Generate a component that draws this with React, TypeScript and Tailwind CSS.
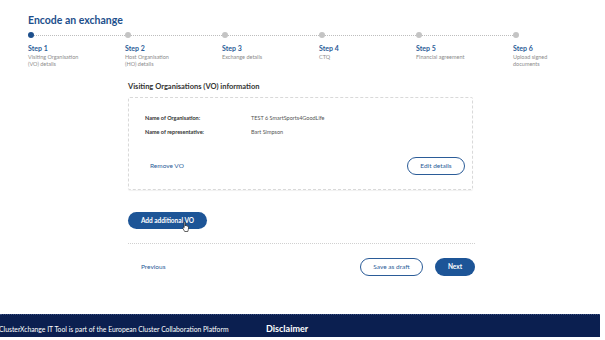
import { Fragment } from "react";

const steps = [
  { title: "Step 1", desc: ["Visiting Organisation", "(VO) details"], active: true },
  { title: "Step 2", desc: ["Host Organisation", "(HO) details"] },
  { title: "Step 3", desc: ["Exchange details"] },
  { title: "Step 4", desc: ["CTQ"] },
  { title: "Step 5", desc: ["Financial agreement"] },
  { title: "Step 6", desc: ["Upload signed", "documents"] },
];

function HandCursor() {
  return (
    <svg width="9" height="11" viewBox="0 0 18 22" className="absolute left-[54px] top-[9px]">
      <path
        d="M5 1.5c1 0 1.6.7 1.6 1.6V10l.2-1.2c.2-.9 1.6-1 2 0l.1 1c.3-.9 1.7-.9 2 0l.1.8c.4-.8 1.7-.7 1.9.2.3 1.6.3 4.2-.3 6.4L11.6 21H5.4L2 15.2c-.6-1-.4-2.1.4-2.5.8-.4 1.5 0 1.9.6V3.1c0-.9.4-1.6.7-1.6z"
        fill="#fff"
        stroke="#111"
        strokeWidth="1.3"
        strokeLinejoin="round"
      />
    </svg>
  );
}

export default function App() {
  return (
    <div
      className="w-[605px] h-[340px] bg-white flex flex-col overflow-hidden"
      style={{ fontFamily: "Lato, 'Noto Sans', sans-serif" }}
    >
      {/* Header + stepper */}
      <div className="pl-[28px] pt-[13px]">
        <h1 className="text-[10.5px] leading-[14px] font-bold text-[#1d4f8c]">Encode an exchange</h1>
        <div className="mt-[5px] flex">
          {steps.map((s, i) => (
            <div key={s.title} className="w-[97px] shrink-0">
              <div className="flex items-center h-[6px]">
                <span
                  className={`w-[6px] h-[6px] rounded-full shrink-0 ${s.active ? "bg-[#1d4f8c]" : "bg-[#c4c4c4]"}`}
                />
                {i < steps.length - 1 && (
                  <span className="flex-1 border-t border-dotted border-[#bdbdbd]" />
                )}
              </div>
              <p className="mt-[6px] text-[7px] leading-[8px] font-bold text-[#2b5c98]">{s.title}</p>
              <p className="mt-[2px] text-[5.5px] leading-[6.5px] text-[#8c8c8c]">
                {s.desc.map((d, j) => (
                  <Fragment key={d}>
                    {j > 0 && <br />}
                    {d}
                  </Fragment>
                ))}
              </p>
            </div>
          ))}
        </div>
      </div>

      {/* Main */}
      <div className="ml-[128px] w-[347px] mt-[15px]">
        <h2 className="text-[7.5px] leading-[10px] font-bold text-[#333]">
          Visiting Organisations (VO) information
        </h2>
        <div className="mt-[5px] w-[345px] h-[93px] border border-dashed border-[#d9d9d9] rounded-[2px] shadow-[0_1px_1px_rgba(0,0,0,0.06)] pl-[16px] pr-[7px] pt-[16px]">
          <div className="flex text-[5.5px] leading-[8px] text-[#333]">
            <span className="w-[106px] font-bold">Name of Organisation:</span>
            <span className="text-[#555]">TEST 6 SmartSports4GoodLife</span>
          </div>
          <div className="mt-[6px] flex text-[5.5px] leading-[8px] text-[#333]">
            <span className="w-[106px] font-bold">Name of representative:</span>
            <span className="text-[#555]">Bart Simpson</span>
          </div>
          <div className="mt-[21px] flex items-center justify-between">
            <span className="ml-[5px] text-[6.5px] text-[#2b5c98]">Remove VO</span>
            <button className="w-[58px] h-[18px] rounded-full border border-[#2b5c98] text-[6.5px] text-[#2b5c98]">
              Edit details
            </button>
          </div>
        </div>

        <button className="relative mt-[22px] w-[79px] h-[17px] rounded-full bg-[#1d5597] text-white text-[6.5px] font-bold">
          Add additional VO
          <HandCursor />
        </button>

        <div className="mt-[14px] border-t border-dotted border-[#d0d0d0]" />

        <div className="mt-[14px] flex items-center">
          <span className="ml-[13px] text-[6.5px] text-[#2b5c98]">Previous</span>
          <button className="ml-auto w-[63px] h-[18px] rounded-full border border-[#2b5c98] text-[6.5px] text-[#2b5c98]">
            Save as draft
          </button>
          <button className="ml-[12px] w-[40px] h-[18px] rounded-full bg-[#1d5597] text-white text-[6.5px] font-bold">
            Next
          </button>
        </div>
      </div>

      {/* Footer */}
      <div className="mt-auto mb-[3px] w-[600px] h-[23px] bg-[#0b1f50] flex items-end pb-[3px] border-t border-dotted border-[#3a4f80]">
        <span className="w-[267px] -ml-[1px] text-[6.8px] leading-[9px] text-white whitespace-nowrap">
          ClusterXchange IT Tool is part of the European Cluster Collaboration Platform
        </span>
        <span className="text-[9px] leading-[11px] font-bold text-white">Disclaimer</span>
      </div>
    </div>
  );
}
